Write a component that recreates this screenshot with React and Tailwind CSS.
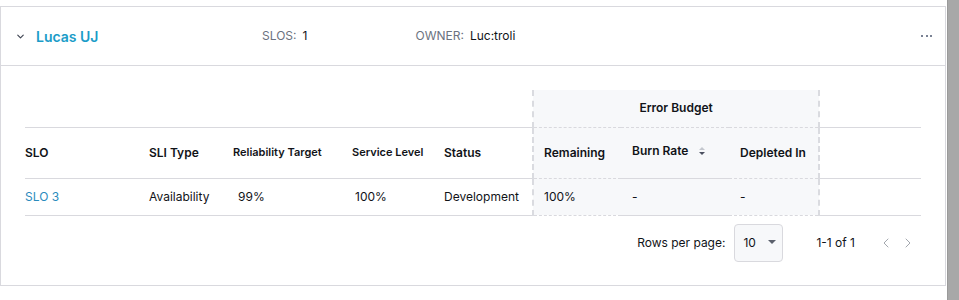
import { ChevronDown, ChevronLeft, ChevronRight } from "lucide-react";

const font = { fontFamily: "Inter, 'Noto Sans', sans-serif" };

function SortIcon() {
  return (
    <svg width="8" height="10" viewBox="0 0 8 10" className="ml-[10px] inline-block align-middle">
      <path d="M4 1 L7 4 H1 Z" fill="#c4c7ce" />
      <path d="M4 9 L7 6 H1 Z" fill="#4b5060" />
    </svg>
  );
}

const cols = [124, 84, 119, 92, 89, 88, 108, 90, 102];

export default function App() {
  const dashL = "border-l-2 border-dashed border-l-[#dadbe0]";
  const dashR = "border-r-2 border-dashed border-r-[#dadbe0]";
  const budget = "bg-[#f7f8fa]";
  const line = "border-b border-[#d9d9de]";

  return (
    <div className="flex h-[300px] w-[959px] bg-white text-[#111318]" style={font}>
      <div className="w-[946px] shrink-0 pt-[6px]">
        <div className="h-[280px] w-[946px] border border-[#d9d9de]">
          {/* header */}
          <div className={`flex h-[59px] items-center ${line}`}>
            <ChevronDown size={11} strokeWidth={2.5} className="ml-[14px] text-[#3f4452]" />
            <span className="ml-[10px] w-[226px] text-[14px] font-semibold text-[#1b9cc8]">Lucas UJ</span>
            <span className="text-[12px] text-[#6b7280]">SLOS:</span>
            <span className="ml-[6px] w-[113px] text-[12px] font-normal">1</span>
            <span className="text-[12px] text-[#6b7280]">OWNER:</span>
            <span className="ml-[6px] text-[12px] font-normal">Luc:troli</span>
            <div className="ml-auto mr-[13px] flex gap-[2.5px]">
              <span className="h-[2px] w-[2px] bg-[#7a8294]" />
              <span className="h-[2px] w-[2px] bg-[#7a8294]" />
              <span className="h-[2px] w-[2px] bg-[#7a8294]" />
            </div>
          </div>

          {/* table */}
          <div className="ml-[24px] mt-[24px] w-[896px]">
            <table className="w-[896px] table-fixed border-collapse text-left">
              <colgroup>
                {cols.map((w, i) => (
                  <col key={i} style={{ width: w }} />
                ))}
              </colgroup>
              <thead>
                <tr className="h-[37px]">
                  <th colSpan={5} className={line}></th>
                  <th colSpan={3} className={`${budget} ${dashL} ${dashR} ${line} text-center text-[12px] font-semibold`}>
                    Error Budget
                  </th>
                  <th className={line}></th>
                </tr>
                <tr className="h-[51px] text-[12px] font-semibold">
                  <th className={`${line} font-semibold`}>SLO</th>
                  <th className={`${line} font-semibold`}>SLI Type</th>
                  <th className={`${line} text-[11px] font-semibold`}>Reliability Target</th>
                  <th className={`${line} text-[11px] font-semibold`}>Service Level</th>
                  <th className={`${line} font-semibold`}>Status</th>
                  <th className={`${line} ${budget} ${dashL} pl-[10px] font-semibold`}>Remaining</th>
                  <th className={`${line} ${budget} pl-[11px] pb-[4px] font-semibold`}>
                    Burn Rate
                    <SortIcon />
                  </th>
                  <th className={`${line} ${budget} ${dashR} pl-[11px] font-semibold`}>Depleted In</th>
                  <th className={line}></th>
                </tr>
              </thead>
              <tbody>
                <tr className="h-[37px] text-[12px]">
                  <td className={`${line} text-[#2a8bbd]`}>SLO 3</td>
                  <td className={line}>Availability</td>
                  <td className={`${line} pl-[5px]`}>99%</td>
                  <td className={`${line} pl-[3px]`}>100%</td>
                  <td className={line}>Development</td>
                  <td className={`${line} ${budget} ${dashL} pl-[10px]`}>100%</td>
                  <td className={`${line} ${budget} pl-[11px]`}>-</td>
                  <td className={`${line} ${budget} ${dashR} pl-[11px]`}>-</td>
                  <td className={line}></td>
                </tr>
              </tbody>
            </table>

            {/* pagination */}
            <div className="flex h-[54px] items-center justify-end text-[12px]">
              <span>Rows per page:</span>
              <div className="ml-[9px] flex h-[38px] w-[49px] items-center rounded-[4px] border border-[#d9d9de] bg-[#f7f8fa] pl-[8px]">
                <span>10</span>
                <svg width="8" height="5" viewBox="0 0 8 5" className="ml-[12px]">
                  <path d="M0 0 H8 L4 4 Z" fill="#5b606c" />
                </svg>
              </div>
              <span className="ml-[33px]">1-1 of 1</span>
              <ChevronLeft size={16} strokeWidth={1.5} className="ml-[23px] text-[#a3a7ae]" />
              <ChevronRight size={16} strokeWidth={1.5} className="ml-[6px] mr-[5px] text-[#a3a7ae]" />
            </div>
          </div>
        </div>
      </div>
      <div className="ml-[1px] h-[300px] w-[12px] border-l border-[#9a9a9a] bg-[#a8a8a8]" />
    </div>
  );
}
